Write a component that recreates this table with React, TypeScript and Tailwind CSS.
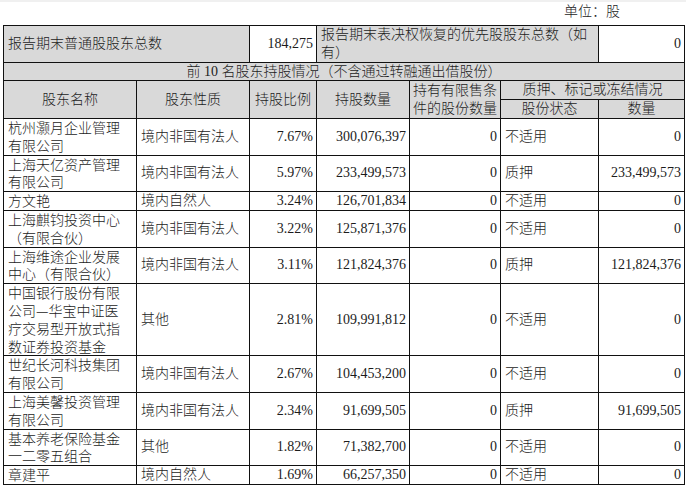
import React from 'react'

interface Holder {
  name: string
  kind: string
  ratio: string
  shares: string
  restricted: string
  status: string
  pledged: string
}

const HOLDERS: Holder[] = [
  { name: '杭州灏月企业管理有限公司', kind: '境内非国有法人', ratio: '7.67%', shares: '300,076,397', restricted: '0', status: '不适用', pledged: '0' },
  { name: '上海天亿资产管理有限公司', kind: '境内非国有法人', ratio: '5.97%', shares: '233,499,573', restricted: '0', status: '质押', pledged: '233,499,573' },
  { name: '方文艳', kind: '境内自然人', ratio: '3.24%', shares: '126,701,834', restricted: '0', status: '不适用', pledged: '0' },
  { name: '上海麒钧投资中心（有限合伙）', kind: '境内非国有法人', ratio: '3.22%', shares: '125,871,376', restricted: '0', status: '不适用', pledged: '0' },
  { name: '上海维途企业发展中心（有限合伙）', kind: '境内非国有法人', ratio: '3.11%', shares: '121,824,376', restricted: '0', status: '质押', pledged: '121,824,376' },
  { name: '中国银行股份有限公司—华宝中证医疗交易型开放式指数证券投资基金', kind: '其他', ratio: '2.81%', shares: '109,991,812', restricted: '0', status: '不适用', pledged: '0' },
  { name: '世纪长河科技集团有限公司', kind: '境内非国有法人', ratio: '2.67%', shares: '104,453,200', restricted: '0', status: '不适用', pledged: '0' },
  { name: '上海美馨投资管理有限公司', kind: '境内非国有法人', ratio: '2.34%', shares: '91,699,505', restricted: '0', status: '质押', pledged: '91,699,505' },
  { name: '基本养老保险基金一二零五组合', kind: '其他', ratio: '1.82%', shares: '71,382,700', restricted: '0', status: '不适用', pledged: '0' },
  { name: '章建平', kind: '境内自然人', ratio: '1.69%', shares: '66,257,350', restricted: '0', status: '不适用', pledged: '0' },
]

const cell = 'border border-[#111] px-1 align-middle'
const grayCell = `${cell} bg-[#d9d9d9]`

function App() {
  return (
    <div
      className="w-[686px] h-[487px] overflow-hidden bg-white text-[14px] leading-[17.8px] text-[#1c1c1c] font-light"
      style={{ fontFamily: '"Liberation Serif", "Noto Sans CJK SC", serif' }}
    >
      <div className="h-[2px] bg-[#f0f0f0]" />
      <div className="h-[23px] pt-[1px] pr-[66px] flex justify-end leading-[18px]">单位：股</div>

      <table className="ml-[3px] w-[681px] table-fixed border-collapse">
        <colgroup>
          <col className="w-[133px]" />
          <col className="w-[113px]" />
          <col className="w-[67px]" />
          <col className="w-[93px]" />
          <col className="w-[91px]" />
          <col className="w-[98px]" />
          <col className="w-[86px]" />
        </colgroup>
        <tbody>
          <tr>
            <td colSpan={2} className={`${grayCell} text-left`}>
              报告期末普通股股东总数
            </td>
            <td className={`${cell} text-right pr-[3px]`}>184,275</td>
            <td colSpan={3} className={`${grayCell} text-left`}>
              报告期末表决权恢复的优先股股东总数（如有）
            </td>
            <td className={`${cell} text-right pr-[3px]`}>0</td>
          </tr>
          <tr>
            <td colSpan={7} className={`${grayCell} text-center`}>
              前 10 名股东持股情况（不含通过转融通出借股份）
            </td>
          </tr>
          <tr>
            <td rowSpan={2} className={`${grayCell} text-center`}>股东名称</td>
            <td rowSpan={2} className={`${grayCell} text-center`}>股东性质</td>
            <td rowSpan={2} className={`${grayCell} text-center`}>持股比例</td>
            <td rowSpan={2} className={`${grayCell} text-center`}>持股数量</td>
            <td rowSpan={2} className={`${grayCell} text-center !px-[2px]`}>持有有限售条件的股份数量</td>
            <td colSpan={2} className={`${grayCell} text-center`}>质押、标记或冻结情况</td>
          </tr>
          <tr>
            <td className={`${grayCell} text-center`}>股份状态</td>
            <td className={`${grayCell} text-center`}>数量</td>
          </tr>
          {HOLDERS.map(h => (
            <tr key={h.name}>
              <td className={`${cell} text-left font-['Noto_Sans_CJK_SC']`}>{h.name}</td>
              <td className={`${cell} text-left`}>{h.kind}</td>
              <td className={`${cell} text-right pr-[3px]`}>{h.ratio}</td>
              <td className={`${cell} text-right pr-[3px]`}>{h.shares}</td>
              <td className={`${cell} text-right pr-[3px]`}>{h.restricted}</td>
              <td className={`${cell} text-left`}>{h.status}</td>
              <td className={`${cell} text-right pr-[3px]`}>{h.pledged}</td>
            </tr>
          ))}
        </tbody>
      </table>
    </div>
  )
}

export default App
